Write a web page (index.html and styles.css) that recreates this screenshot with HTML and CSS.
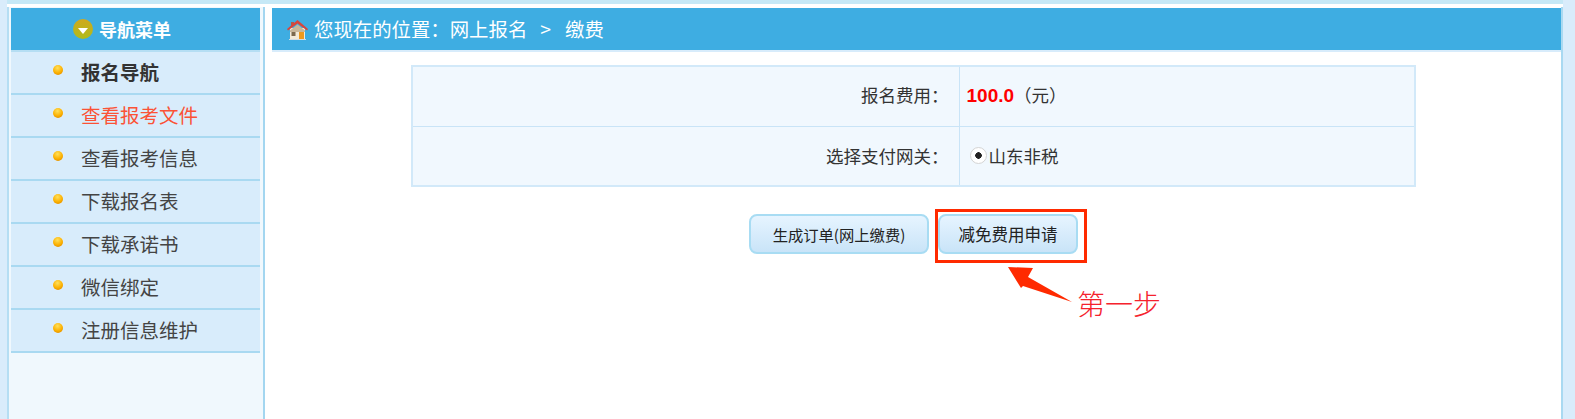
FILE: index.html
```html
<!DOCTYPE html>
<html lang="zh-CN">
<head>
  <meta charset="UTF-8">
  <title>网上报名 - 缴费</title>
  <link rel="stylesheet" href="styles.css">
</head>
<body>
  <div class="frame">
    <div class="sidebar">
      <div class="side-title">
        <span class="down-icon"></span>
        <span>导航菜单</span>
      </div>
      <ul class="menu">
        <li class="menu-item menu-head"><span class="dot"></span>报名导航</li>
        <li class="menu-item menu-active"><span class="dot"></span>查看报考文件</li>
        <li class="menu-item"><span class="dot"></span>查看报考信息</li>
        <li class="menu-item"><span class="dot"></span>下载报名表</li>
        <li class="menu-item"><span class="dot"></span>下载承诺书</li>
        <li class="menu-item"><span class="dot"></span>微信绑定</li>
        <li class="menu-item"><span class="dot"></span>注册信息维护</li>
      </ul>
    </div>
    <div class="main">
      <div class="crumb">
        <svg class="home-icon" width="21" height="21" viewBox="0 0 21 21">
          <path d="M3 9h15v11H3z" fill="#f3ead8"/>
          <path d="M4 3h3v4H4z" fill="#b8574a"/>
          <path d="M0 10 10.500 1 21 10l-1 1.500-9.500-7-9.500 7z" fill="#d9453c"/>
          <path d="M3 11.500 10.500 5.500 18 11.500V13H3z" fill="#c9b79a"/>
          <rect x="4.500" y="13" width="4" height="4" fill="#7d6a4e"/>
          <rect x="12" y="13" width="5" height="7" fill="#ee9a1e"/>
          <path d="M2 20h17v1H2z" fill="#d5dde0"/>
        </svg>
        <span>您现在的位置：网上报名</span><span class="crumb-sep">&gt;</span><span>缴费</span>
      </div>
      <table class="pay-table">
        <tr>
          <td class="label">报名费用：</td>
          <td class="value"><span class="fee">100.0</span>（元）</td>
        </tr>
        <tr>
          <td class="label">选择支付网关：</td>
          <td class="value"><label class="gate"><input class="gate-radio" type="radio" checked>山东非税</label></td>
        </tr>
      </table>
      <div class="actions">
        <button class="btn btn-order">生成订单(网上缴费)</button>
        <button class="btn btn-apply">减免费用申请</button>
      </div>
      <div class="mark-box"></div>
      <svg class="mark-arrow" width="66" height="37" viewBox="0 0 66 37">
        <path d="M0 0 25 1 20 10 64 35 15 19 13 21z" fill="#ff2a00"/>
      </svg>
      <div class="mark-text">第一步</div>
    </div>
  </div>
</body>
</html>
```

FILE: styles.css
```css
html, body {
  height: 100%;
}
body {
  margin: 0;
  overflow: hidden;
  background: #d9ecfb;
  font-family: "Noto Sans CJK SC", "Liberation Sans", sans-serif;
  color: #333;
}
.frame {
  display: flex;
  height: 419px;
  box-sizing: border-box;
  margin: 0 12px 0 7px;
  padding-top: 3px;
  border-top: 4px solid #c5e8f6;
  background: #fff;
}
.sidebar {
  flex: none;
  width: 249px;
  padding: 1px 3px 0 2px;
  border-left: 2px solid #b5def3;
  border-right: 2px solid #a3d6f0;
  background: #f0f8fd;
}
.side-title {
  display: flex;
  align-items: center;
  gap: 6px;
  height: 42px;
  padding-left: 62px;
  background: #3eade2;
  color: #fff;
  font-size: 18px;
  font-weight: 700;
}
.down-icon {
  display: flex;
  align-items: center;
  justify-content: center;
  width: 20px;
  height: 20px;
  border-radius: 50%;
  background: linear-gradient(#d0a81e, #aebc1c);
}
.down-icon::before {
  content: "";
  margin-top: 3px;
  border-style: solid;
  border-width: 6px 5.500px 0;
  border-color: #fff transparent transparent;
}
.menu {
  margin: 0;
  padding: 0;
  list-style: none;
  border-top: 2px solid #b5def3;
}
.menu-item {
  display: flex;
  align-items: center;
  box-sizing: border-box;
  height: 43px;
  padding: 0 0 2px 42px;
  background: #d8ecfb;
  border-bottom: 2px solid #a9d9f1;
  font-size: 19.500px;
  color: #444;
}
.menu-head {
  font-weight: 700;
  color: #333;
}
.menu-active {
  color: #fb5236;
}
.dot {
  flex: none;
  width: 10px;
  height: 10px;
  margin: -4px 18px 0 0;
  border-radius: 50%;
  background: radial-gradient(circle at 45% 30%, #ffe05a, #fbb000 55%, #d07c00);
  box-shadow: 0 0 1px #fff;
}
.main {
  flex: 1;
  position: relative;
  padding: 1px 0 0 7px;
  border-right: 2px solid #a9d9f1;
}
.crumb {
  display: flex;
  align-items: center;
  box-sizing: border-box;
  height: 44px;
  padding: 0 0 2px 15px;
  background: #3eade2;
  border-bottom: 2px solid #d8ecfb;
  color: #fff;
  font-size: 19.400px;
}
.home-icon {
  flex: none;
  margin: 2px 6px 0 0;
}
.crumb-sep {
  margin: 0 14px 0 13px;
}
.pay-table {
  width: 1005px;
  margin: 13px 0 0 139px;
  border-collapse: collapse;
  border: 2px solid #d2e9f9;
  background: #f1f8fe;
  font-size: 17.500px;
}
.pay-table td {
  height: 60px;
  padding: 0 0 4px;
  box-sizing: border-box;
  border: 1px solid #c9e4f7;
}
.pay-table tr:last-child td {
  padding-bottom: 0;
}
.pay-table .label {
  width: 547px;
  padding-right: 10px;
  text-align: right;
}
.pay-table .value {
  padding-left: 7px;
}
.fee {
  font-family: "Liberation Sans", sans-serif;
  font-size: 19px;
  font-weight: 700;
  color: #f00;
}
.gate {
  display: flex;
  align-items: center;
  gap: 2px;
  padding-left: 3px;
}
.gate-radio {
  appearance: none;
  width: 17px;
  height: 17px;
  margin: 0;
  border: 1px solid #d4d4d4;
  border-radius: 50%;
  background: radial-gradient(circle, #222 0 3px, #fff 3.500px);
}
.actions {
  display: flex;
  gap: 9px;
  margin: 27px 0 0 477px;
}
.btn {
  height: 40px;
  padding: 0;
  border: 2px solid #a8dcf3;
  border-radius: 8px;
  background: linear-gradient(#e6f4ff, #c9e4f8);
  font-family: inherit;
  font-size: 15.300px;
  color: #222;
}
.btn-order {
  width: 180px;
}
.btn-apply {
  width: 140px;
  font-size: 16.500px;
}
.mark-box {
  position: absolute;
  left: 670px;
  top: 202px;
  width: 146px;
  height: 48px;
  border: 3px solid #ff2a00;
}
.mark-arrow {
  position: absolute;
  left: 743px;
  top: 260px;
}
.mark-text {
  position: absolute;
  left: 812px;
  top: 278px;
  font-size: 28px;
  line-height: 36px;
  font-weight: 300;
  color: #f5222d;
}
```
